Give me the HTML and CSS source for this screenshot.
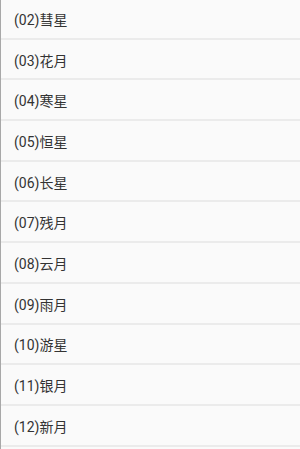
FILE: index.html
```html
<!DOCTYPE html>
<html>
<head>
<meta charset="utf-8">
<link rel="stylesheet" href="styles.css">
</head>
<body>
<div class="list">
  <div class="row">(02)彗星</div>
  <div class="row">(03)花月</div>
  <div class="row">(04)寒星</div>
  <div class="row">(05)恒星</div>
  <div class="row">(06)长星</div>
  <div class="row">(07)残月</div>
  <div class="row">(08)云月</div>
  <div class="row">(09)雨月</div>
  <div class="row">(10)游星</div>
  <div class="row">(11)银月</div>
  <div class="row">(12)新月</div>
</div>
</body>
</html>
```

FILE: styles.css
```css
html, body {
  margin: 0;
  padding: 0;
  background: #fafafa;
  overflow: hidden;
}
.list {
  display: flex;
  flex-direction: column;
  margin-top: -1px;
  border-left: 1px solid #a8a8a8;
  min-height: 460px;
}
.row {
  box-sizing: border-box;
  height: 40.7px;
  display: flex;
  align-items: center;
  padding-left: 13px;
  padding-top: 1px;
  border-bottom: 2px solid #ebebeb;
  font-family: Roboto, "Noto Sans CJK SC", sans-serif;
  font-size: 14px;
  color: #333333;
}
```
